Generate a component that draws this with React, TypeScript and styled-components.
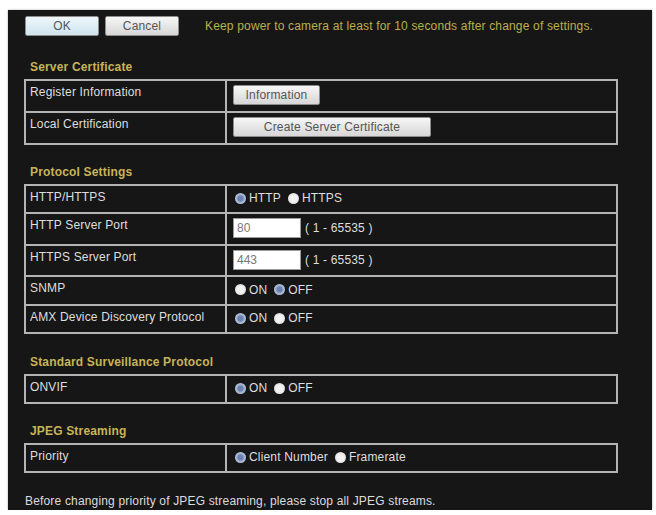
import React from "react";
import styled, { createGlobalStyle } from "styled-components";

const Global = createGlobalStyle`
  html, body { margin: 0; padding: 0; background: #ffffff; }
  body { font-family: "Liberation Sans", Arial, sans-serif; font-size: 12px; letter-spacing: 0.17px; }
`;

const Panel = styled.div`
  margin: 10px 0 0 8px;
  width: 644px;
  height: 500px;
  box-sizing: border-box;
  padding: 6px 34px 0 16px;
  background: #161616;
  box-shadow: 0 0 2px rgba(0,0,0,0.35);
`;

const TopBar = styled.div`
  display: flex;
  align-items: center;
  height: 20px;
  padding-left: 1px;
  gap: 6px;
`;

const PushButton = styled.button<{ $primary?: boolean; $width: number }>`
  width: ${(p) => p.$width}px;
  height: 20px;
  box-sizing: border-box;
  border: 1px solid #8c8c8c;
  border-radius: 2px;
  padding: 0;
  font-family: "Liberation Sans", Arial, sans-serif;
  font-size: 12px;
  letter-spacing: 0.17px;
  color: #555;
  background: ${(p) =>
    p.$primary
      ? "linear-gradient(#eef7fb, #cfe4ee)"
      : "linear-gradient(#f7f7f7, #d6d6d6)"};
`;

const Warning = styled.span`
  margin-left: 20px;
  color: #bdb04a;
  font-size: 12px;
`;

const Section = styled.section<{ $gap: number }>`
  margin-top: ${(p) => p.$gap}px;
`;

const SectionTitle = styled.div`
  font-weight: bold;
  font-size: 12px;
  line-height: 14px;
  height: 14px;
  color: #c8b456;
  padding-left: 6px;
  margin-bottom: 5px;
`;

const Table = styled.div`
  width: 594px;
  box-sizing: border-box;
  border: 2px solid #b4b4b4;
`;

const Row = styled.div<{ $h: number }>`
  display: grid;
  grid-template-columns: 201px 1fr;
  min-height: ${(p) => p.$h}px;
  & + & {
    border-top: 2px solid #b4b4b4;
  }
`;

const Label = styled.div`
  box-sizing: border-box;
  border-right: 2px solid #b4b4b4;
  padding: 4px 0 0 4px;
  line-height: 14px;
  color: #dedede;
  font-size: 12px;
`;

const Value = styled.div`
  display: flex;
  align-items: center;
  padding: 0 0 2px 6px;
  color: #dedede;
  font-size: 12px;
`;

const TextInput = styled.input`
  width: 68px;
  height: 20px;
  box-sizing: border-box;
  border: 1px solid #9a9a9a;
  background: #fff;
  color: #777;
  font-family: "Liberation Sans", Arial, sans-serif;
  font-size: 12px;
  padding: 0 3px;
  margin: 0 4px 0 0;
`;

const RadioItem = styled.span`
  display: inline-flex;
  align-items: center;
  margin-right: 5px;
`;

const Dot = styled.span<{ $on?: boolean }>`
  display: inline-block;
  width: 11px;
  height: 11px;
  border-radius: 50%;
  margin: 0 3px 0 2px;
  box-sizing: border-box;
  background: ${(p) =>
    p.$on
      ? "radial-gradient(circle, #6b82b3 0 35%, #9fb0cc 45%, #c8d0dc 100%)"
      : "radial-gradient(circle, #f2f2f2 0 40%, #cfcfcf 100%)"};
`;

const Footer = styled.div`
  margin-top: 21px;
  padding-left: 1px;
  line-height: 14px;
  color: #dcdcdc;
  font-size: 12px;
`;

type Opt = { label: string; on?: boolean };

const Radios = ({ options }: { options: Opt[] }) => (
  <>
    {options.map((o) => (
      <RadioItem key={o.label}>
        <Dot $on={o.on} />
        {o.label}
      </RadioItem>
    ))}
  </>
);

export default function App() {
  return (
    <>
      <Global />
      <Panel>
        <TopBar>
          <PushButton $primary $width={74}>OK</PushButton>
          <PushButton $width={74}>Cancel</PushButton>
          <Warning>Keep power to camera at least for 10 seconds after change of settings.</Warning>
        </TopBar>

        <Section $gap={24}>
          <SectionTitle>Server Certificate</SectionTitle>
          <Table>
            <Row $h={30}>
              <Label>Register Information</Label>
              <Value>
                <PushButton $width={87}>Information</PushButton>
              </Value>
            </Row>
            <Row $h={30}>
              <Label>Local Certification</Label>
              <Value>
                <PushButton $width={198}>Create Server Certificate</PushButton>
              </Value>
            </Row>
          </Table>
        </Section>

        <Section $gap={20}>
          <SectionTitle>Protocol Settings</SectionTitle>
          <Table>
            <Row $h={26}>
              <Label>HTTP/HTTPS</Label>
              <Value>
                <Radios options={[{ label: "HTTP", on: true }, { label: "HTTPS" }]} />
              </Value>
            </Row>
            <Row $h={30}>
              <Label>HTTP Server Port</Label>
              <Value>
                <TextInput defaultValue="80" />( 1 - 65535 )
              </Value>
            </Row>
            <Row $h={29}>
              <Label>HTTPS Server Port</Label>
              <Value>
                <TextInput defaultValue="443" />( 1 - 65535 )
              </Value>
            </Row>
            <Row $h={27}>
              <Label>SNMP</Label>
              <Value>
                <Radios options={[{ label: "ON" }, { label: "OFF", on: true }]} />
              </Value>
            </Row>
            <Row $h={26}>
              <Label>AMX Device Discovery Protocol</Label>
              <Value>
                <Radios options={[{ label: "ON", on: true }, { label: "OFF" }]} />
              </Value>
            </Row>
          </Table>
        </Section>

        <Section $gap={21}>
          <SectionTitle>Standard Surveillance Protocol</SectionTitle>
          <Table>
            <Row $h={26}>
              <Label>ONVIF</Label>
              <Value>
                <Radios options={[{ label: "ON", on: true }, { label: "OFF" }]} />
              </Value>
            </Row>
          </Table>
        </Section>

        <Section $gap={20}>
          <SectionTitle>JPEG Streaming</SectionTitle>
          <Table>
            <Row $h={26}>
              <Label>Priority</Label>
              <Value>
                <Radios options={[{ label: "Client Number", on: true }, { label: "Framerate" }]} />
              </Value>
            </Row>
          </Table>
        </Section>

        <Footer>Before changing priority of JPEG streaming, please stop all JPEG streams.</Footer>
      </Panel>
    </>
  );
}
